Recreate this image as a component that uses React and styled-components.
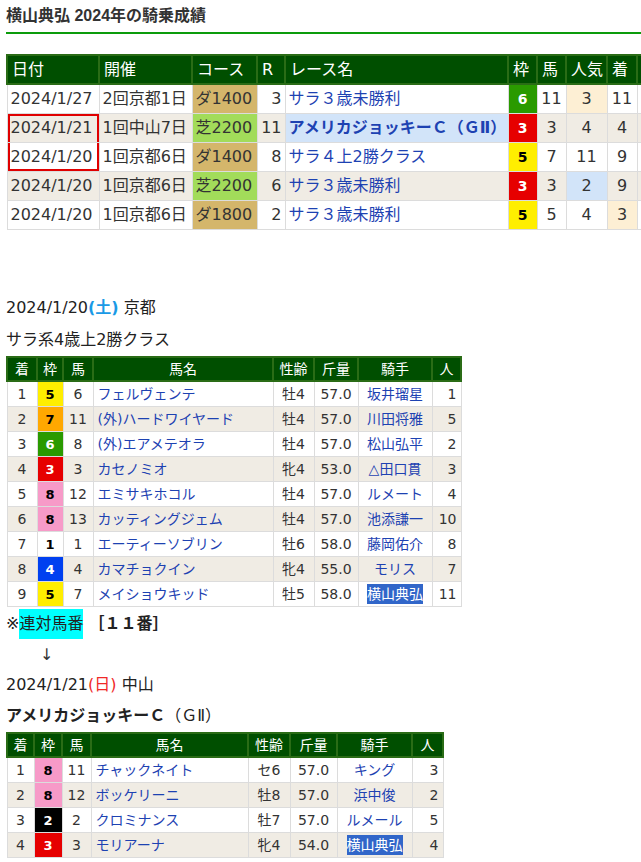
import React from "react";
import styled, { createGlobalStyle } from "styled-components";

const GlobalStyle = createGlobalStyle`
  html, body {
    margin: 0;
    padding: 0;
    background: #fff;
    overflow-x: hidden;
  }
  body {
    font-family: "DejaVu Sans", "Noto Sans CJK JP", sans-serif;
    color: #333;
  }
`;

const WAKU = {
  1: { bg: "#ffffff", fg: "#000" },
  2: { bg: "#000000", fg: "#fff" },
  3: { bg: "#e60000", fg: "#fff" },
  4: { bg: "#0040f0", fg: "#fff" },
  5: { bg: "#ffee00", fg: "#000" },
  6: { bg: "#2a9a00", fg: "#fff" },
  7: { bg: "#ffa800", fg: "#000" },
  8: { bg: "#f79ac8", fg: "#000" },
};

const CELL_BG = {
  beige: "#f0ece4",
  blue: "#d2e4f9",
  peach: "#fdefd4",
  dirt: "#d4b66b",
  turf: "#a2dc5a",
};

const history = [
  { date: "2024/1/27", kai: "2回京都1日", course: "ダ1400", r: 3, race: "サラ３歳未勝利", waku: 6, uma: 11, ninki: 3, chaku: 11, ninkiBg: "peach" },
  { date: "2024/1/21", kai: "1回中山7日", course: "芝2200", r: 11, race: "アメリカジョッキーＣ（ＧⅡ）", waku: 3, uma: 3, ninki: 4, chaku: 4, stripe: true, big: true, mark: "top" },
  { date: "2024/1/20", kai: "1回京都6日", course: "ダ1400", r: 8, race: "サラ４上2勝クラス", waku: 5, uma: 7, ninki: 11, chaku: 9, mark: "bottom" },
  { date: "2024/1/20", kai: "1回京都6日", course: "芝2200", r: 6, race: "サラ３歳未勝利", waku: 3, uma: 3, ninki: 2, chaku: 9, stripe: true, ninkiBg: "blue" },
  { date: "2024/1/20", kai: "1回京都6日", course: "ダ1800", r: 2, race: "サラ３歳未勝利", waku: 5, uma: 5, ninki: 4, chaku: 3, chakuBg: "peach" },
];

const race1 = [
  [1, 5, 6, "フェルヴェンテ", "牡4", "57.0", "坂井瑠星", 1],
  [2, 7, 11, "(外)ハードワイヤード", "牡4", "57.0", "川田将雅", 5],
  [3, 6, 8, "(外)エアメテオラ", "牡4", "57.0", "松山弘平", 2],
  [4, 3, 3, "カセノミオ", "牝4", "53.0", "△田口貫", 3],
  [5, 8, 12, "エミサキホコル", "牡4", "57.0", "ルメート", 4],
  [6, 8, 13, "カッティングジェム", "牡4", "57.0", "池添謙一", 10],
  [7, 1, 1, "エーティーソブリン", "牡6", "58.0", "藤岡佑介", 8],
  [8, 4, 4, "カマチョクイン", "牝4", "55.0", "モリス", 7],
  [9, 5, 7, "メイショウキッド", "牡5", "58.0", "横山典弘", 11],
];

const race2 = [
  [1, 8, 11, "チャックネイト", "セ6", "57.0", "キング", 3],
  [2, 8, 12, "ボッケリーニ", "牡8", "57.0", "浜中俊", 2],
  [3, 2, 2, "クロミナンス", "牡7", "57.0", "ルメール", 5],
  [4, 3, 3, "モリアーナ", "牝4", "54.0", "横山典弘", 4],
];

function ResultTable({ rows, widths }) {
  return (
    <Grid $small style={{ width: widths.reduce((a, b) => a + b, 0) }}>
      <colgroup>
        {widths.map((w, i) => <col key={i} style={{ width: w }} />)}
      </colgroup>
      <thead>
        <tr>
          {["着", "枠", "馬", "馬名", "性齢", "斤量", "騎手", "人"].map((h) => (
            <Head key={h} $small $align="center">{h}</Head>
          ))}
        </tr>
      </thead>
      <tbody>
        {rows.map((r, i) => (
          <Row key={i} $stripe={i % 2 === 1}>
            <Cell $small $align="center">{r[0]}</Cell>
            <Waku $small $n={r[1]}>{r[1]}</Waku>
            <Cell $small $align="center">{r[2]}</Cell>
            <Cell $small $link>{r[3]}</Cell>
            <Cell $small $align="center">{r[4]}</Cell>
            <Cell $small $align="center">{r[5]}</Cell>
            <Cell $small $link $align="center">
              {r[6] === "横山典弘" ? <Mark>{r[6]}</Mark> : r[6]}
            </Cell>
            <Cell $small $align="right">{r[7]}</Cell>
          </Row>
        ))}
      </tbody>
    </Grid>
  );
}

export default function App() {
  return (
    <Page>
      <GlobalStyle />
      <Title>横山典弘 2024年の騎乗成績</Title>

      <Grid style={{ width: 668 }}>
        <colgroup>
          {[92, 93, 65, 28, 223, 29, 29, 41, 30, 38].map((w, i) => <col key={i} style={{ width: w }} />)}
        </colgroup>
        <thead>
          <tr>
            <Head>日付</Head>
            <Head>開催</Head>
            <Head>コース</Head>
            <Head>R</Head>
            <Head>レース名</Head>
            <Head>枠</Head>
            <Head>馬</Head>
            <Head>人気</Head>
            <Head>着</Head>
            <Head />
          </tr>
        </thead>
        <tbody>
          {history.map((h, i) => (
            <Row key={i} $stripe={h.stripe}>
              <Cell $mark={h.mark}>{h.date}</Cell>
              <Cell>{h.kai}</Cell>
              <Cell $bg={h.course.startsWith("芝") ? "turf" : "dirt"}>{h.course}</Cell>
              <Cell $align="right">{h.r}</Cell>
              <Cell $link $bold={h.big} $bg={h.big ? "blue" : undefined}>{h.race}</Cell>
              <Waku $n={h.waku}>{h.waku}</Waku>
              <Cell $align="center">{h.uma}</Cell>
              <Cell $align="center" $bg={h.ninkiBg}>{h.ninki}</Cell>
              <Cell $align="center" $bg={h.chakuBg}>{h.chaku}</Cell>
              <Cell />
            </Row>
          ))}
        </tbody>
      </Grid>

      <Info $top={62}>2024/1/20<Day $color="#1a9ae6" $bold>(土)</Day> 京都</Info>
      <Info>サラ系4歳上2勝クラス</Info>
      <ResultTable rows={race1} widths={[30, 26, 30, 180, 41, 44, 74, 29]} />

      <Note>
        ※<Cyan>連対馬番</Cyan> <b>［１１番］</b>
      </Note>
      <Arrow>↓</Arrow>
      <Info $h={30}>2024/1/21<Day $color="#f02828">(日)</Day> 中山</Info>
      <Info $h={32}><b>アメリカジョッキーＣ</b>（ＧⅡ）</Info>
      <ResultTable rows={race2} widths={[27, 28, 29, 157, 42, 47, 75, 31]} />
    </Page>
  );
}

const Page = styled.div`
  padding: 0 0 0 6px;
  width: 700px;
`;

const Title = styled.h2`
  margin: 0 0 20px;
  padding: 6px 0 6px;
  font: bold 16px/20px "Liberation Sans", "Noto Sans CJK JP", sans-serif;
  color: #333;
  border-bottom: 2px solid #0c9c0c;
`;

const Grid = styled.table`
  border-collapse: collapse;
  table-layout: fixed;
  font-size: ${(p) => (p.$small ? "14px" : "16px")};
`;

const Row = styled.tr`
  background: ${(p) => (p.$stripe ? CELL_BG.beige : "#fff")};
`;

const Head = styled.th`
  height: ${(p) => (p.$small ? "22px" : "27px")};
  padding: 0 ${(p) => (p.$small ? "0" : "4px")};
  background: #004f00;
  color: #fff;
  border: 2px solid #2a6c16;
  font-weight: normal;
  font-size: ${(p) => (p.$small ? "14px" : "16px")};
  line-height: 1;
  text-align: ${(p) => p.$align || "left"};
  white-space: nowrap;
  overflow: hidden;
`;

const Cell = styled.td`
  height: ${(p) => (p.$small ? "24px" : "28px")};
  padding: 0 ${(p) => (p.$small ? "4px" : "3px")};
  border: 1px solid #dcdcdc;
  line-height: 1;
  white-space: nowrap;
  overflow: hidden;
  text-align: ${(p) => p.$align || "left"};
  color: ${(p) => (p.$link ? "#1d42b2" : "#333")};
  font-weight: ${(p) => (p.$bold ? "bold" : "normal")};
  ${(p) => p.$bg && `background: ${CELL_BG[p.$bg]};`}
  ${(p) => p.$mark === "top" && `box-shadow: inset 2px 2px 0 #e00000, inset -2px 0 0 #e00000;`}
  ${(p) => p.$mark === "bottom" && `box-shadow: inset 2px -2px 0 #e00000, inset -2px 0 0 #e00000;`}
`;

const Waku = styled.td`
  padding: 0;
  border: 1px solid #dcdcdc;
  text-align: center;
  font-weight: bold;
  font-size: ${(p) => (p.$small ? "13px" : "14px")};
  line-height: 1;
  background: ${(p) => WAKU[p.$n].bg};
  color: ${(p) => WAKU[p.$n].fg};
`;

const Mark = styled.span`
  background: #3166c9;
  color: #fff;
  padding: 2px 0;
`;

const Info = styled.div`
  margin-top: ${(p) => (p.$top ? `${p.$top}px` : "0")};
  height: ${(p) => (p.$h ? `${p.$h}px` : "32px")};
  line-height: ${(p) => (p.$h ? `${p.$h}px` : "32px")};
  font-size: 16px;
  color: #222;
  white-space: nowrap;
`;

const Day = styled.span`
  color: ${(p) => p.$color};
  font-weight: ${(p) => (p.$bold ? "bold" : "normal")};
`;

const Note = styled.div`
  margin-top: 2px;
  height: 31px;
  font-size: 16px;
  line-height: 30px;
  color: #222;
  white-space: nowrap;

  b {
    font-weight: bold;
  }
`;

const Cyan = styled.span`
  display: inline-block;
  background: #00ffff;
  line-height: 30px;
`;

const Arrow = styled.div`
  height: 30px;
  padding-left: 34px;
  font-size: 16px;
  line-height: 30px;
  color: #333;
`;
